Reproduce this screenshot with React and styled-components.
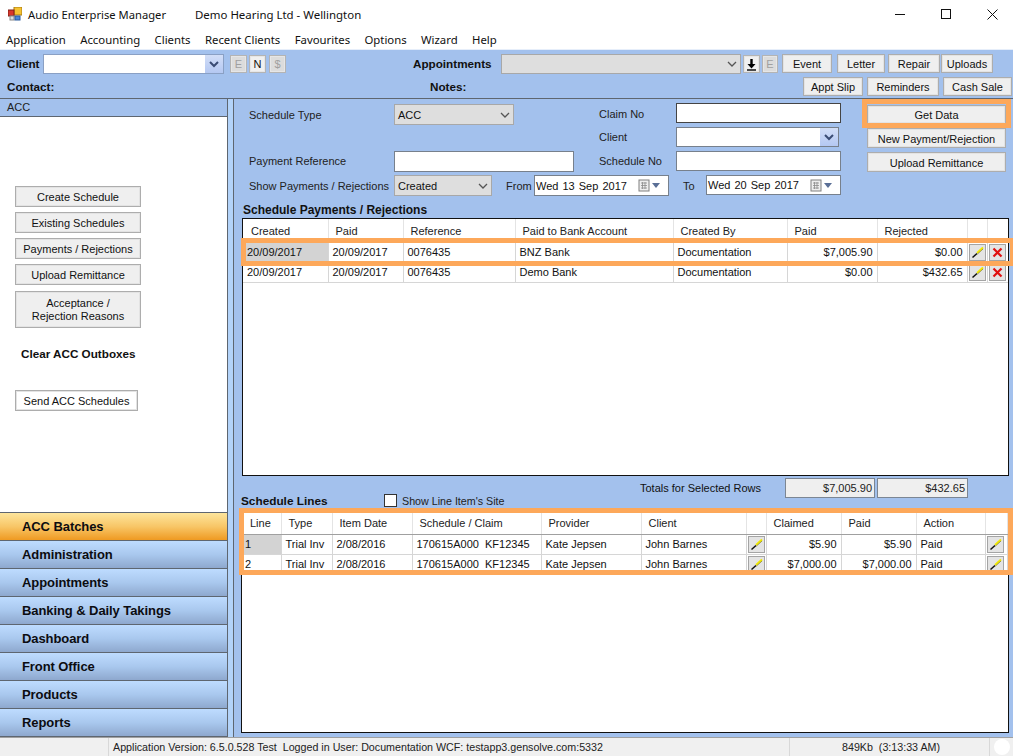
import React from "react";
import styled, { createGlobalStyle } from "styled-components";

const Global = createGlobalStyle`
  html, body { margin: 0; padding: 0; background: #fff; }
  * { box-sizing: border-box; }
  body { font-family: "Liberation Sans", Arial, sans-serif; font-size: 11px; color: #111; overflow: hidden; }
`;

const AppWindow = styled.div`
  position: relative; width: 1013px; height: 756px; display: flex; flex-direction: column; overflow: hidden; background: #a3c1ed;
`;
const TitleBar = styled.div`
  height: 30px; background: #fff; display: flex; align-items: center; padding: 0 0 2px 8px; flex: none;
  font-family: "Noto Sans", sans-serif; font-size: 11.2px;
`;
const AppName = styled.span` margin-left: 6px; width: 167px; `;
const Company = styled.span` font-size: 11.45px; `;
const WindowControls = styled.div` margin-left: auto; margin-right: -2px; display: flex; align-items: center; `;
const WinBtn = styled.span` width: 46px; height: 28px; display: flex; align-items: center; justify-content: center; `;
const MenuBar = styled.div`
  height: 19px; background: #fff; display: flex; gap: 14.4px; padding-left: 6px; align-items: center; flex: none;
  font-family: "Noto Sans", sans-serif; font-size: 11.35px;
`;
const Toolbar = styled.div`
  height: 50px; flex: none; background: #a3c1ed; border-top: 1px solid #e6eefa; border-bottom: 1px solid #5e6670;
`;
const ToolRow = styled.div` display: flex; align-items: flex-start; height: 22px; padding-left: 7px; `;
const ToolRowOne = styled(ToolRow)` padding-top: 4px; height: 27px; `;
const Bold = styled.b`
  font-weight: bold; font-size: 11.7px; width: ${p => p.$w}px; flex: none; padding-top: 3px; margin-left: ${p => p.$ml || 0}px; color: #111;
`;
const Combo = styled.div`
  width: ${p => p.$w}px; height: ${p => p.$h || 20}px; flex: none; background: ${p => p.$bg || "#fff"};
  border: 1px solid ${p => p.$border || "#8b97a8"}; display: flex; align-items: center; justify-content: space-between;
  padding-left: 3px; color: #111; margin-top: ${p => p.$mt || 0}px;
`;
const SquareBtn = styled.span`
  width: ${p => p.$w || 17}px; height: 18px; flex: none; margin: 1px 0 0 ${p => p.$ml}px;
  background: ${p => p.$off ? "#dcdcdc" : "#f0f0f0"}; border: 1px solid #b4b4b4; box-shadow: inset 0 0 0 1px #e6e6e6;
  color: ${p => p.$off ? "#a0a0a0" : "#111"}; display: flex; align-items: center; justify-content: center; font-size: 11px;
`;
const Btn = styled.button`
  width: ${p => p.$w}px; height: ${p => p.$h || 20}px; flex: none; margin: ${p => p.$mt || 0}px 0 0 ${p => p.$ml || 0}px;
  font: 11px "Liberation Sans", Arial, sans-serif; color: #111; padding: ${p => p.$pt ?? 2}px 0 0; line-height: 13px;
  background: ${p => p.$bg || "#efefef"}; border: 1px solid #adadad; box-shadow: inset 0 0 0 1px #e3e3e3; border-radius: 0;
`;
const DropChip = styled.span`
  width: 18px; height: 18px; background: linear-gradient(#d2def7, #b4c8f2); display: flex; align-items: center; justify-content: center; flex: none;
`;
const ChevronPad = styled.span` display: flex; width: 17px; justify-content: center; flex: none; `;
const Main = styled.div` flex: 1; display: grid; grid-template-columns: 228px 780px; column-gap: 5px; background: #b3d3f9; min-height: 0; `;
const Left = styled.aside`
  display: flex; flex-direction: column; background: #fff; border-right: 1px solid #5e6670;
`;
const LeftHead = styled.div`
  height: 18px; flex: none; background: #a3c1ed; border-bottom: 1px solid #5e6670; padding: 2px 0 0 7px; color: #222;
`;
const LeftBody = styled.div` flex: 1; display: flex; flex-direction: column; padding: 69px 0 0 15px; background: #fff; `;
const Clear = styled.b` font-size: 11.7px; margin: 19px 0 29px 6px; color: #111; line-height: 14px; `;
const Nav = styled.nav` flex: none; border-top: 1px solid #5e6670; `;
const NavItem = styled.div`
  height: 28px; padding-left: 22px; display: flex; align-items: center; font-weight: bold; font-size: 13px; letter-spacing: -0.08px; color: #0c0c10;
  border-bottom: 1px solid #5e6670;
  background: ${p => p.$on ? "linear-gradient(#fde59c, #f8c667 50%, #ef9a22)" : "linear-gradient(#bedcff, #a9c8ee 50%, #8ea8ce)"};
`;
const Right = styled.section`
  position: relative; display: flex; flex-direction: column; background: #a3c1ed;
  border-left: 1px solid #5e6670; padding-left: 8px; width: 780px; overflow: hidden;
`;
const Form = styled.div`
  display: grid; grid-template-columns: 145px 180px 25px 77px 165px 26px 139px; grid-auto-rows: 24px;
  padding: 4px 0 0 7px; flex: none; align-items: start; color: #222;
`;
const Label = styled.span` padding-top: ${p => p.$pt || 4}px; white-space: nowrap; `;
const Field = styled.div`
  height: ${p => p.$h || 20}px; background: #fff; border: 1px solid ${p => p.$dark ? "#444" : "#77808c"};
`;
const SpanRow = styled.div` grid-column: 2 / span 4; display: flex; align-items: flex-start; `;
const DateBox = styled.div`
  height: ${p => p.$h || 21}px; width: 135px; flex: none; background: #fff; border: 1px solid #77808c; display: flex; align-items: center; justify-content: space-between;
  padding: 0 5px 0 1px; color: #111; word-spacing: 1px; white-space: nowrap;
`;
const CalendarIcon = styled.svg` flex: none; `;
const SideLabel = styled.span` padding-top: 5px; flex: none; margin-left: ${p => p.$ml}px; width: ${p => p.$w}px; `;
const SectionTitle = styled.div` height: 19px; padding: 4px 0 0 1px; font-weight: bold; font-size: 12px; line-height: 14px; flex: none; color: #111; `;
const TableBox = styled.div`
  flex: none; width: ${p => p.$w}px; height: ${p => p.$h}px; background: #fff; border: 1px solid #111; margin-left: ${p => p.$ml || 0}px; padding-left: ${p => p.$pl || 0}px; overflow: hidden;
`;
const Table = styled.table`
  border-collapse: collapse; table-layout: fixed; width: ${p => p.$w}px; font-size: 11px; color: #111;
`;
const Th = styled.th`
  height: 23px; font-weight: normal; text-align: left; padding: 2px 0 0 ${p => p.$pl || 7}px; border-right: 1px solid #e4e4e4; border-bottom: 1px solid #a0a0a0; color: #222; white-space: nowrap;
`;
const Td = styled.td`
  height: 20px; padding: 0 ${p => p.$right ? "4px" : "0"} 0 ${p => p.$pl ?? 4}px; text-align: ${p => p.$right ? "right" : "left"};
  border-right: 1px solid #d6d6d6; border-bottom: 1px solid #d6d6d6; white-space: nowrap; overflow: hidden;
  background: ${p => p.$sel ? "#d3d3d3" : "#fff"};
`;
const IconCell = styled.td` padding: 0 0 0 1px; border-right: 1px solid #d6d6d6; border-bottom: 1px solid #d6d6d6; height: 20px; `;
const IconBtn = styled.span`
  width: 17px; height: 17px; background: #e4e4e4; border: 1px solid #a4a4a4; display: flex; align-items: center; justify-content: center;
`;
const Band = styled.div` height: 34px; display: flex; flex: none; `;
const LinesHead = styled.div` width: 397px; margin-left: -1px; align-self: flex-end; display: flex; align-items: center; height: 17px; padding-bottom: 2px; flex: none; `;
const LinesTitle = styled.b` font-size: 11.8px; width: 143px; flex: none; `;
const Check = styled.span` width: 13px; height: 13px; background: #fff; border: 1px solid #333; flex: none; margin-right: 5px; `;
const CheckText = styled.span` font-size: 10.7px; color: #222; `;
const TotalsLabel = styled.span` width: 145px; flex: none; padding-top: 6px; margin-left: 2px; `;
const TotalBox = styled.div`
  width: ${p => p.$w}px; height: 20px; margin: 2px 2px 0 0; background: #efefef; border: 1px solid #7c8693; text-align: right; padding: 3px 2px 0 0; flex: none; color: #222;
`;
const Overlay = styled.div`
  position: absolute; border: 5px solid #fda85a; pointer-events: none;
  left: ${p => p.$x}px; top: ${p => p.$y}px; width: ${p => p.$w}px; height: ${p => p.$h}px;
`;
const Status = styled.footer`
  height: 19px; flex: none; background: #f0f0f0; border-top: 1px solid #a0a0a0; display: flex; align-items: center; color: #222; font-size: 10.7px;
`;
const StatusCell = styled.span`
  height: 100%; width: ${p => p.$w}px; flex: none; border-right: 1px solid #d8d8d8; padding: 3px 0 0 ${p => p.$pl || 0}px; white-space: nowrap;
`;
const Dot = styled.span` width: 16px; height: 16px; border-radius: 50%; background: #fff; margin-left: 4px; flex: none; `;

const Chevron = ({ c = "#555" }) => (
  <svg width="10" height="6" viewBox="0 0 10 6"><path d="M1 1l4 4 4-4" fill="none" stroke={c} strokeWidth="1.3" /></svg>
);
const ChipDrop = () => <DropChip><svg width="10" height="7" viewBox="0 0 10 7"><path d="M1 1l4 4 4-4" fill="none" stroke="#3a4c74" strokeWidth="2" /></svg></DropChip>;
const Pencil = () => (
  <svg width="13" height="13" viewBox="0 0 13 13">
    <path d="M6 7L12 1.5" stroke="#f0e800" strokeWidth="1.9" />
    <path d="M6.5 8L12 3" stroke="#6a6410" strokeWidth=".6" />
    <path d="M1.5 11.5L6 7.5" stroke="#111" strokeWidth="1.5" />
  </svg>
);
const Cross = () => (
  <svg width="11" height="11" viewBox="0 0 11 11"><path d="M1.5 1.5l8 8M9.5 1.5l-8 8" stroke="#e01010" strokeWidth="2.2" /></svg>
);
const Calendar = () => (
  <CalendarIcon width="25" height="13" viewBox="0 0 25 13">
    <rect x="1" y="1" width="10" height="11" fill="#eee" stroke="#808080" />
    <path d="M3 4h6M3 6.5h6M3 9h6M4.5 3v7M7 3v7" stroke="#8a8a8a" strokeWidth=".8" />
    <path d="M14 4h8l-4 5z" fill="#5a6f96" />
  </CalendarIcon>
);
const Logo = () => (
  <svg width="14" height="14" viewBox="0 0 14 14">
    <rect x="6" y="0" width="8" height="8" fill="#f5c230" stroke="#a97a10" />
    <rect x="0" y="3" width="6" height="6" fill="#d8362a" stroke="#7d1e16" />
    <rect x="2" y="9" width="4" height="4" fill="#ddd" stroke="#888" />
    <rect x="7" y="9" width="5" height="4" fill="#4a86d8" stroke="#2a5a9c" />
  </svg>
);

const payments = [
  ["20/09/2017", "20/09/2017", "0076435", "BNZ Bank", "Documentation", "$7,005.90", "$0.00"],
  ["20/09/2017", "20/09/2017", "0076435", "Demo Bank", "Documentation", "$0.00", "$432.65"],
];
const lines = [
  ["1", "Trial Inv", "2/08/2016", "170615A000\u00a0\u00a0KF12345", "Kate Jepsen", "John Barnes", "$5.90", "$5.90", "Paid"],
  ["2", "Trial Inv", "2/08/2016", "170615A000\u00a0\u00a0KF12345", "Kate Jepsen", "John Barnes", "$7,000.00", "$7,000.00", "Paid"],
];
const payCols = [85, 75, 112, 158, 114, 90, 90, 20, 21];
const lineCols = [38, 51, 80, 129, 100, 105, 20, 75, 75, 69, 22];
const navs = ["ACC Batches", "Administration", "Appointments", "Banking & Daily Takings", "Dashboard", "Front Office", "Products", "Reports"];
const menus = ["Application", "Accounting", "Clients", "Recent Clients", "Favourites", "Options", "Wizard", "Help"];

export default function App() {
  return (
    <AppWindow>
      <Global />
      <TitleBar>
        <Logo />
        <AppName>Audio Enterprise Manager</AppName>
        <Company>Demo Hearing Ltd - Wellington</Company>
        <WindowControls>
          <WinBtn><svg width="10" height="10" viewBox="0 0 10 10"><path d="M0 5.5h10" stroke="#111" /></svg></WinBtn>
          <WinBtn><svg width="10" height="10" viewBox="0 0 10 10"><rect x=".5" y=".5" width="9" height="9" fill="none" stroke="#111" /></svg></WinBtn>
          <WinBtn><svg width="11" height="11" viewBox="0 0 11 11"><path d="M.5.5l10 10M10.5.5l-10 10" stroke="#111" /></svg></WinBtn>
        </WindowControls>
      </TitleBar>
      <MenuBar>{menus.map(m => <span key={m}>{m}</span>)}</MenuBar>
      <Toolbar>
        <ToolRowOne>
          <Bold $w={36}>Client</Bold>
          <Combo $w={181} $border="#8aa0c4"><span /><ChipDrop /></Combo>
          <SquareBtn $ml={6} $off>E</SquareBtn>
          <SquareBtn $ml={2}>N</SquareBtn>
          <SquareBtn $ml={3} $off>$</SquareBtn>
          <Bold $w={88} $ml={127}>Appointments</Bold>
          <Combo $w={240} $h={20} $bg="#dedede" $border="#a8a8a8"><span /><ChevronPad><Chevron /></ChevronPad></Combo>
          <SquareBtn $ml={2} $w={17}>
            <svg width="11" height="13" viewBox="0 0 11 13"><path d="M5.5 1v7" stroke="#000" strokeWidth="2.4" /><path d="M1.5 6h8l-4 4.5z" fill="#000" /><path d="M1 12h9" stroke="#000" strokeWidth="1.4" /></svg>
          </SquareBtn>
          <SquareBtn $ml={2} $w={16} $off>E</SquareBtn>
          <Btn $w={50} $h={19} $ml={4}>Event</Btn>
          <Btn $w={48} $h={19} $ml={5}>Letter</Btn>
          <Btn $w={52} $h={19} $ml={3}>Repair</Btn>
          <Btn $w={52} $h={19} $ml={1}>Uploads</Btn>
        </ToolRowOne>
        <ToolRow>
          <Bold $w={423}>Contact:</Bold>
          <Bold $w={373}>Notes:</Bold>
          <Btn $w={60} $h={19}>Appt Slip</Btn>
          <Btn $w={72} $h={19} $ml={4}>Reminders</Btn>
          <Btn $w={69} $h={19} $ml={4}>Cash Sale</Btn>
        </ToolRow>
      </Toolbar>
      <Main>
        <Left>
          <LeftHead>ACC</LeftHead>
          <LeftBody>
            <Btn $w={126} $h={21}>Create Schedule</Btn>
            <Btn $w={126} $h={21} $mt={5}>Existing Schedules</Btn>
            <Btn $w={126} $h={21} $mt={5}>Payments / Rejections</Btn>
            <Btn $w={126} $h={21} $mt={5}>Upload Remittance</Btn>
            <Btn $w={126} $h={37} $mt={6} $pt={0}>Acceptance /<br />Rejection Reasons</Btn>
            <Clear>Clear ACC Outboxes</Clear>
            <Btn $w={123} $h={21} $bg="#fff">Send ACC Schedules</Btn>
          </LeftBody>
          <Nav>{navs.map((n, i) => <NavItem key={n} $on={i === 0}>{n}</NavItem>)}</Nav>
        </Left>
        <Right>
          <Form>
            <Label $pt={6}>Schedule Type</Label>
            <Combo $w={120} $h={21} $bg="#dedede" $border="#a8a8a8" $mt={1}>ACC<ChevronPad><Chevron /></ChevronPad></Combo>
            <span />
            <Label $pt={5}>Claim No</Label>
            <Field $dark />
            <span />
            <Btn $w={139} $h={19} $mt={2}>Get Data</Btn>

            <span /><span /><span />
            <Label>Client</Label>
            <Combo $w={163} $border="#77808c"><span /><ChipDrop /></Combo>
            <span />
            <Btn $w={139} $h={20} $mt={1}>New Payment/Rejection</Btn>

            <Label>Payment Reference</Label>
            <Field $h={21} />
            <span />
            <Label>Schedule No</Label>
            <Field />
            <span />
            <Btn $w={139} $h={20} $mt={1}>Upload Remittance</Btn>

            <Label $pt={5}>Show Payments / Rejections</Label>
            <SpanRow>
              <Combo $w={98} $h={21} $bg="#dedede" $border="#a8a8a8">Created<ChevronPad><Chevron /></ChevronPad></Combo>
              <SideLabel $ml={14} $w={28}>From</SideLabel>
              <DateBox>Wed 13 Sep 2017<Calendar /></DateBox>
              <SideLabel $ml={14} $w={23}>To</SideLabel>
              <DateBox $h={20}>Wed 20 Sep 2017<Calendar /></DateBox>
            </SpanRow>
          </Form>
          <SectionTitle>Schedule Payments / Rejections</SectionTitle>
          <TableBox $w={767} $h={258}>
            <Table $w={765}>
              <colgroup>{payCols.map((w, i) => <col key={i} width={w} />)}</colgroup>
              <thead><tr>
                {["Created", "Paid", "Reference", "Paid to Bank Account", "Created By", "Paid", "Rejected", "", ""].map((h, i) => <Th key={i} $pl={i === 0 ? 8 : 7}>{h}</Th>)}
              </tr></thead>
              <tbody>
                {payments.map((r, i) => (
                  <tr key={i}>
                    {r.map((c, j) => <Td key={j} $right={j > 4} $sel={j === 0 && i === 0}>{c}</Td>)}
                    <IconCell><IconBtn><Pencil /></IconBtn></IconCell>
                    <IconCell><IconBtn><Cross /></IconBtn></IconCell>
                  </tr>
                ))}
              </tbody>
            </Table>
          </TableBox>
          <Band>
            <LinesHead>
              <LinesTitle>Schedule Lines</LinesTitle>
              <Check />
              <CheckText>Show Line Item's Site</CheckText>
            </LinesHead>
            <TotalsLabel>Totals for Selected Rows</TotalsLabel>
            <TotalBox $w={90}>$7,005.90</TotalBox>
            <TotalBox $w={91}>$432.65</TotalBox>
          </Band>
          <TableBox $w={768} $h={223} $ml={-1} $pl={1}>
            <Table $w={764}>
              <colgroup>{lineCols.map((w, i) => <col key={i} width={w} />)}</colgroup>
              <thead><tr>
                {["Line", "Type", "Item Date", "Schedule / Claim", "Provider", "Client", "", "Claimed", "Paid", "Action", ""].map((h, i) => <Th key={i}>{h}</Th>)}
              </tr></thead>
              <tbody>
                {lines.map((r, i) => (
                  <tr key={i}>
                    <Td $sel={i === 0} $pl={2}>{r[0]}</Td>
                    <Td>{r[1]}</Td>
                    <Td>{r[2]}</Td>
                    <Td>{r[3]}</Td>
                    <Td>{r[4]}</Td>
                    <Td>{r[5]}</Td>
                    <IconCell><IconBtn><Pencil /></IconBtn></IconCell>
                    <Td $right>{r[6]}</Td>
                    <Td $right>{r[7]}</Td>
                    <Td>{r[8]}</Td>
                    <IconCell><IconBtn><Pencil /></IconBtn></IconCell>
                  </tr>
                ))}
              </tbody>
            </Table>
          </TableBox>
          <Overlay $x={628} $y={0} $w={149} $h={29} />
          <Overlay $x={7} $y={139} $w={774} $h={28} />
          <Overlay $x={5} $y={409} $w={774} $h={67} />
        </Right>
      </Main>
      <Status>
        <StatusCell $w={109} />
        <StatusCell $w={681} $pl={4}>Application Version: 6.5.0.528 Test&nbsp; Logged in User: Documentation WCF: testapp3.gensolve.com:5332</StatusCell>
        <StatusCell $w={200} $pl={52}>849Kb&nbsp; (3:13:33 AM)</StatusCell>
        <Dot />
      </Status>
    </AppWindow>
  );
}
